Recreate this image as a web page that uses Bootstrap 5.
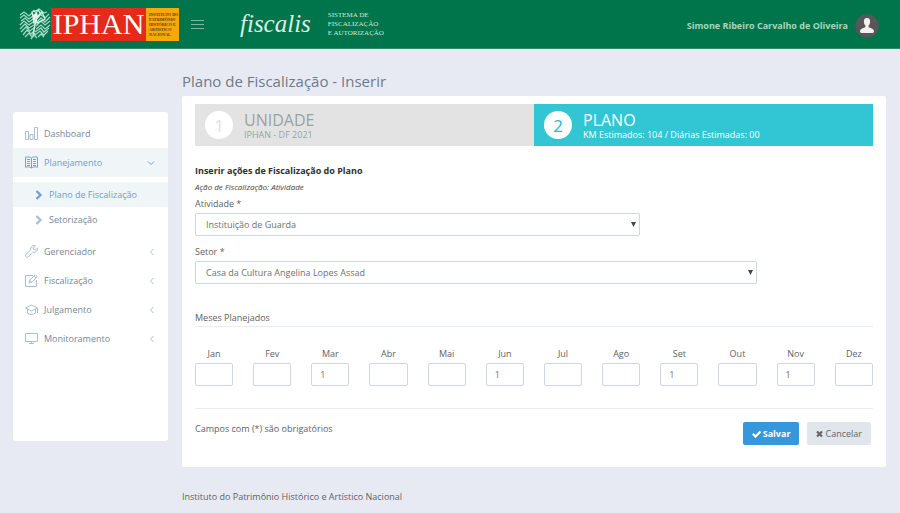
<!DOCTYPE html>
<html lang="pt-BR">
<head>
<meta charset="utf-8">
<meta name="viewport" content="width=device-width, initial-scale=1">
<title>Fiscalis - Plano de Fiscalização</title>
<link href="https://cdn.jsdelivr.net/npm/bootstrap@5.3.0/dist/css/bootstrap.min.css" rel="stylesheet">
<style>
  body { background: #e7eaf3; font-family: "Open Sans", sans-serif; font-size: 9px; line-height: 14px; color: #5e6266; }
  .topbar { background: #00754b; height: 49px; border-bottom: 1px solid #2a8b68; padding: 0 21px 0 19px; }
  .brand { color: #fff; font-family: "Liberation Serif", serif; height: 33px; text-decoration: none; }
  .brand-name { background: #e52a1a; font-size: 30px; width: 95px; white-space: nowrap; }
  .brand-note { background: #f7a80a; color: #5c3c08; font-size: 4px; line-height: 5px; font-weight: bold; width: 33px; padding-left: 3px; text-transform: uppercase; white-space: nowrap; }
  .menu-toggle { margin-left: 12px; color: #76b8a4; }
  .system-name { font-family: "Liberation Serif", serif; font-style: italic; font-size: 25px; line-height: 40px; color: #d9efe2; margin-left: 36px; }
  .system-note { font-family: "Liberation Serif", serif; font-size: 7px; line-height: 9px; color: #d0e9dc; margin-left: 17px; }
  .user-link { color: #a5d6bd; font-weight: 700; text-decoration: none; gap: 7px; padding-top: 4px; }
  .layout { gap: 14px; padding: 0 14px 0 13px; }
  .side { flex: 0 0 155px; background: #fff; border-radius: 3px; margin-top: 63px; padding: 7px 0; min-height: 329px; }
  .side a { color: #76879b; text-decoration: none; height: 29px; padding: 0 13px 0 12px; gap: 6px; }
  .side a svg { color: #a9bfd3; flex: none; }
  .side a.on { background: #f0f5f8; color: #6b9fd4; }
  .side a.on svg { color: #6fa3d5; }
  .side .sub { padding: 5px 0; }
  .side .sub a { height: 25px; padding-left: 22px; }
  .content-area { min-width: 0; }
  h1 { font-size: 15px; line-height: 20px; font-weight: 400; color: #6f7b86; margin: 22px 0 5px; }
  .panel { background: #fff; border-radius: 2px; padding: 8px 13px 22px; }
  .step { height: 42px; padding-left: 10px; gap: 11px; background: #e3e3e3; color: #98a3a3; font-size: 9px; line-height: 11px; }
  .step.now { background: #32c5d4; color: #fff; }
  .step-no { width: 28px; height: 28px; border-radius: 50%; background: #fff; font-size: 17px; color: #e0e0e0; }
  .now .step-no { color: #32b5c4; }
  .step-title { font-size: 16px; line-height: 18px; }
  h2 { font-size: 9px; line-height: 14px; font-weight: 700; color: #303030; margin: 18px 0 2px; }
  .hint { font-size: 8px; line-height: 13px; font-style: italic; color: #444; margin-bottom: 4px; }
  .panel form .row { --bs-gutter-x: 20px; }
  .panel label { display: block; margin-bottom: 2px; }
  .box { display: block; width: 100%; height: 23px; border: 1px solid #cfd5e4; border-radius: 2px; background: #fff; color: #707070; font-size: 9px; padding: 0 8px; }
  select.box { appearance: none; padding: 0 10px; }
  .pick { position: relative; margin-bottom: 9px; }
  .pick svg { position: absolute; right: 4px; top: 9px; pointer-events: none; }
  .legend-line { border-bottom: 1px solid #e9eef4; font-size: 9px; line-height: 14px; padding-bottom: 1px; margin: 18px 0 20px; }
  .months label { text-align: center; }
  .actions { border-top: 1px solid #e8eaed; margin-top: 22px; padding: 13px 2px 0 0; }
  .act { height: 23px; border: 0; border-radius: 2px; font-size: 9px; padding: 0 9px; gap: 2px; }
  .save { background: #3598dc; color: #fff; font-weight: 700; }
  .cancel { background: #e1e5ec; color: #666; }
  footer { font-size: 9px; line-height: 14px; margin: 23px 0 9px; }
</style>
</head>
<body>
<header class="topbar d-flex align-items-center">
  <a class="brand d-flex" href="#" aria-label="IPHAN">
    <svg width="32" height="33" viewBox="0 0 32 33" fill="none" stroke="#9ed8c4" stroke-width="1.3">
      <path d="M1 7l4-3 5 4 3-3 3 5M1 10l4-3 5 4 4-3 2 4M2 13l4-3 4 4 4-3 2 4M1 17l4-4 5 4 4-3 2 3M1 21l5-5 4 4 5-3M2 24l5-5 4 4 5-4M4 27l4-5 4 4 4-4M6 29l4-4 3 4 3-4M12 31l3-4 3 3M17 12l4-6 5 4 4-4M17 15l5-5 4 4 5-5M17 18l5-5 4 4 5-4M17 21l5-4 4 4 5-4M16 24l6-4 3 4 5-4M16 27l5-4 4 4 4-4M19 29l3-3 3 3M14 2l3 3 3-4 5 4 3-1"/>
      <path d="M13 4l6-2 3 4-7 8zM17 10l6-6 3 7-8 4zM17 12l-3 15" stroke="#d6efe5"/>
      <path d="M14 7l4-3 1 4-5 6z" fill="#e4f5ec" stroke="none"/>
    </svg>
    <span class="brand-name d-flex align-items-center justify-content-center">IPHAN</span>
    <span class="brand-note d-flex flex-column justify-content-center"><span>Instituto do</span><span>Patrimônio</span><span>Histórico e</span><span>Artístico</span><span>Nacional</span></span>
  </a>
  <button class="menu-toggle btn p-0 border-0 d-flex" type="button" aria-label="Menu">
    <svg width="13" height="11" stroke="currentColor"><path d="M0 1.5h13M0 5.5h13M0 9.5h13"/></svg>
  </button>
  <span class="system-name">fiscalis</span>
  <span class="system-note">SISTEMA DE<br>FISCALIZAÇÃO<br>E AUTORIZAÇÃO</span>
  <a class="user-link d-flex align-items-center ms-auto" href="#"><span>Simone Ribeiro Carvalho de Oliveira</span>
    <svg width="24" height="24" viewBox="0 0 24 24"><circle cx="12" cy="12" r="11.7" fill="#55575a"/><path d="M12 4c-2.200 0-3.300 1.600-3.100 3.900.1 1.600.7 2.800 1.500 3.600v1.400c-.5.900-5 1.300-5.300 3.700-.2 1.500.3 2.300 1.200 2.400h11.400c.9-.1 1.400-.9 1.200-2.400-.3-2.400-4.800-2.800-5.300-3.700v-1.400c.8-.8 1.400-2 1.500-3.600C15.300 5.600 14.200 4 12 4z" fill="#f3f0ee"/></svg>
  </a>
</header>

<div class="layout d-flex align-items-start">
  <nav class="side" aria-label="Principal">
    <a class="d-flex align-items-center" href="#"><svg width="13" height="13" fill="none" stroke="currentColor"><path d="M.5 4.500h3v8h-3zM5 7.500h3v5h-3zM9.500.5h3v12h-3z"/></svg>Dashboard</a>
    <a class="on d-flex align-items-center" href="#"><svg width="13" height="13" fill="none" stroke="currentColor"><path d="M6.500 2C5 .7 2.500.6.500 1.200v10c2-.6 4.500-.5 6 .8 1.500-1.300 4-1.400 6-.8v-10c-2-.6-4.500-.5-6 .8zM6.500 2v10M2 3.500h3M2 5.500h3M2 7.500h3M2 9.500h3M8 3.500h3M8 5.500h3M8 7.500h3M8 9.500h3"/></svg><span class="me-auto">Planejamento</span><svg width="8" height="6" fill="none" stroke="currentColor"><path d="M1 1.500l3 3 3-3"/></svg></a>
    <div class="sub">
      <a class="on d-flex align-items-center" href="#"><svg width="8" height="10" fill="none" stroke="currentColor" stroke-width="2.300"><path d="M1.500 1l4 4-4 4"/></svg>Plano de Fiscalização</a>
      <a class="d-flex align-items-center" href="#"><svg width="8" height="10" fill="none" stroke="currentColor" stroke-width="2.300"><path d="M1.500 1l4 4-4 4"/></svg>Setorização</a>
    </div>
    <a class="d-flex align-items-center" href="#"><svg width="13" height="13" fill="none" stroke="currentColor"><path d="M10.500.9C8.500.1 6.300 1 5.800 3c-.2.700-.1 1.200 0 1.800L1 9.300c-.9.900-.6 2 .1 2.600.7.700 1.800.6 2.500-.1L8 7.200c2.500.7 4.900-1.200 4.400-4L10.300 5 8.500 4.500 8.200 2.800z"/></svg><span class="me-auto">Gerenciador</span><svg width="6" height="8" fill="none" stroke="currentColor"><path d="M4.500 1l-3 3 3 3"/></svg></a>
    <a class="d-flex align-items-center" href="#"><svg width="13" height="13" fill="none" stroke="currentColor"><path d="M8 1.500H.5v11h11V6M4 9l.7-2.800L10.300.7l2 2-5.500 5.500zM9 2l2 2M4.700 6.200l2.100 2"/></svg><span class="me-auto">Fiscalização</span><svg width="6" height="8" fill="none" stroke="currentColor"><path d="M4.500 1l-3 3 3 3"/></svg></a>
    <a class="d-flex align-items-center" href="#"><svg width="13" height="13" fill="none" stroke="currentColor"><path d="M.5 5l6-3 6 3-6 3zM2.500 6v4c2 2 6 2 8 0V6M12.500 5v5"/></svg><span class="me-auto">Julgamento</span><svg width="6" height="8" fill="none" stroke="currentColor"><path d="M4.500 1l-3 3 3 3"/></svg></a>
    <a class="d-flex align-items-center" href="#"><svg width="13" height="13" fill="none" stroke="currentColor"><path d="M.5 1.500h12v8H.5zM6.500 9.500v2M4 11.500h5"/></svg><span class="me-auto">Monitoramento</span><svg width="6" height="8" fill="none" stroke="currentColor"><path d="M4.500 1l-3 3 3 3"/></svg></a>
  </nav>

  <div class="content-area flex-grow-1">
    <h1>Plano de Fiscalização - Inserir</h1>
    <main class="panel">
      <div class="row g-0">
        <div class="col-6 step d-flex align-items-center">
          <span class="step-no d-flex align-items-center justify-content-center">1</span>
          <div><div class="step-title">UNIDADE</div><div>IPHAN - DF 2021</div></div>
        </div>
        <div class="col-6 step now d-flex align-items-center">
          <span class="step-no d-flex align-items-center justify-content-center">2</span>
          <div><div class="step-title">PLANO</div><div>KM Estimados: 104 / Diárias Estimadas: 00</div></div>
        </div>
      </div>

      <form>
        <h2>Inserir ações de Fiscalização do Plano</h2>
        <p class="hint">Ação de Fiscalização: Atividade</p>
        <div class="row"><div class="col-8">
          <label for="atividade">Atividade *</label>
          <div class="pick"><select id="atividade" class="box"><option>Instituição de Guarda</option></select><svg width="5" height="5"><path d="M0 0h5L2.500 5z" fill="#444"/></svg></div>
        </div></div>
        <div class="row"><div class="col-10">
          <label for="setor">Setor *</label>
          <div class="pick"><select id="setor" class="box"><option>Casa da Cultura Angelina Lopes Assad</option></select><svg width="5" height="5"><path d="M0 0h5L2.500 5z" fill="#444"/></svg></div>
        </div></div>

        <h3 class="legend-line">Meses Planejados</h3>
        <div class="row months">
          <div class="col-1"><label for="m1">Jan</label><input id="m1" class="box" type="text"></div>
          <div class="col-1"><label for="m2">Fev</label><input id="m2" class="box" type="text"></div>
          <div class="col-1"><label for="m3">Mar</label><input id="m3" class="box" type="text" value="1"></div>
          <div class="col-1"><label for="m4">Abr</label><input id="m4" class="box" type="text"></div>
          <div class="col-1"><label for="m5">Mai</label><input id="m5" class="box" type="text"></div>
          <div class="col-1"><label for="m6">Jun</label><input id="m6" class="box" type="text" value="1"></div>
          <div class="col-1"><label for="m7">Jul</label><input id="m7" class="box" type="text"></div>
          <div class="col-1"><label for="m8">Ago</label><input id="m8" class="box" type="text"></div>
          <div class="col-1"><label for="m9">Set</label><input id="m9" class="box" type="text" value="1"></div>
          <div class="col-1"><label for="m10">Out</label><input id="m10" class="box" type="text"></div>
          <div class="col-1"><label for="m11">Nov</label><input id="m11" class="box" type="text" value="1"></div>
          <div class="col-1"><label for="m12">Dez</label><input id="m12" class="box" type="text"></div>
        </div>

        <div class="actions d-flex align-items-start">
          <span class="me-auto">Campos com (*) são obrigatórios</span>
          <button type="button" class="act save d-flex align-items-center me-2"><svg width="9" height="8" fill="none" stroke="currentColor" stroke-width="2.200"><path d="M.8 3.800l2.700 2.700L8.500 1.500"/></svg>Salvar</button>
          <button type="button" class="act cancel d-flex align-items-center"><svg width="7" height="8" fill="none" stroke="currentColor" stroke-width="2.200"><path d="M1 1.500l5 5M6 1.500l-5 5"/></svg>Cancelar</button>
        </div>
      </form>
    </main>
    <footer>Instituto do Patrimônio Histórico e Artístico Nacional</footer>
  </div>
</div>
<script src="https://cdn.jsdelivr.net/npm/bootstrap@5.3.0/dist/js/bootstrap.bundle.min.js"></script>
</body>
</html>
